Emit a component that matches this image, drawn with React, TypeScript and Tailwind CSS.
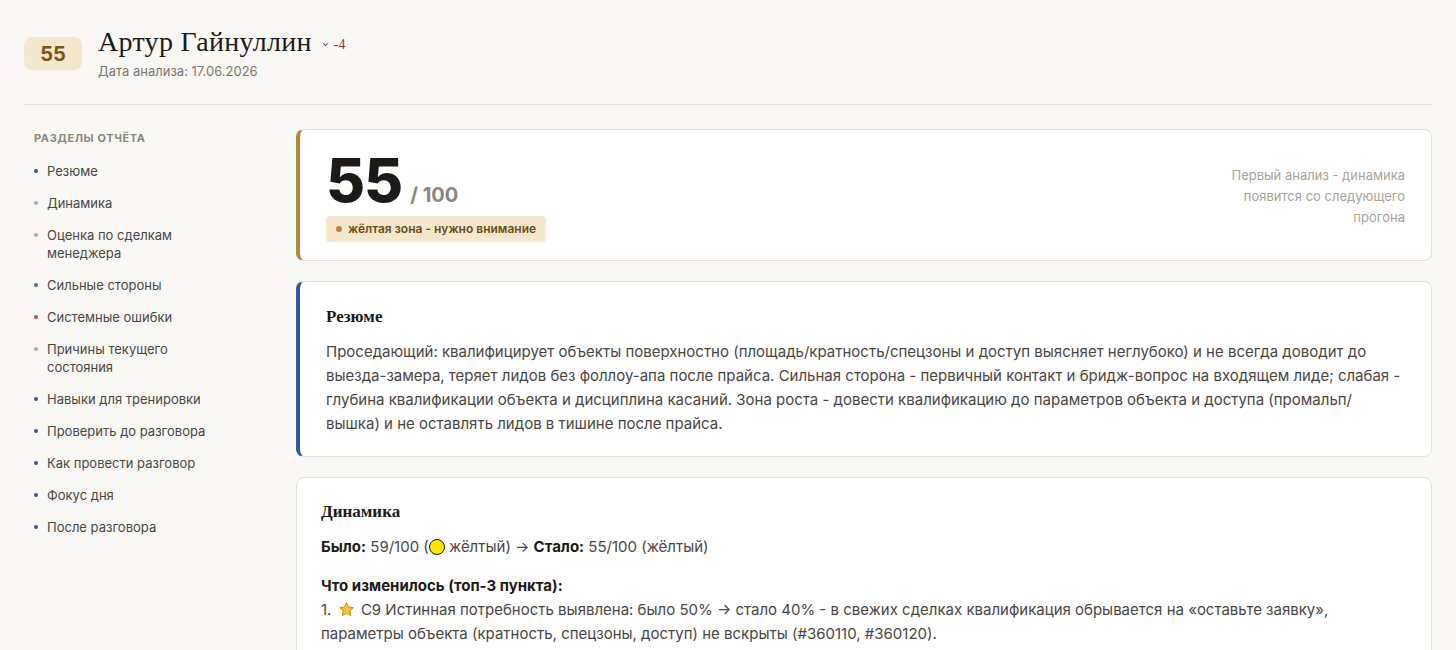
import React from "react";

const sections = [
  { label: "Резюме", dot: "bg-[#2d5a9a]" },
  { label: "Динамика", dot: "bg-[#b5aca0]" },
  { label: "Оценка по сделкам менеджера", dot: "bg-[#b5aca0]" },
  { label: "Сильные стороны", dot: "bg-[#3d8a5a]" },
  { label: "Системные ошибки", dot: "bg-[#c0504a]" },
  { label: "Причины текущего состояния", dot: "bg-[#b5aca0]" },
  { label: "Навыки для тренировки", dot: "bg-[#2d5a9a]" },
  { label: "Проверить до разговора", dot: "bg-[#2d5a9a]" },
  { label: "Как провести разговор", dot: "bg-[#2d5a9a]" },
  { label: "Фокус дня", dot: "bg-[#2d5a9a]" },
  { label: "После разговора", dot: "bg-[#2d5a9a]" },
];

const serif = "font-[family-name:Liberation_Serif,serif]";

function Star() {
  return (
    <svg viewBox="0 0 24 24" className="inline-block h-[17px] w-[17px] align-[-3px] mx-[2px]">
      <path
        d="M12 2.5l2.9 6.1 6.6.8-4.9 4.6 1.3 6.6L12 17.3l-5.9 3.3 1.3-6.6-4.9-4.6 6.6-.8z"
        fill="#f7c23b"
        stroke="#c98a12"
        strokeWidth="1.4"
        strokeLinejoin="round"
      />
    </svg>
  );
}

export default function App() {
  return (
    <div className="min-h-[700px] bg-[#faf8f5] font-[family-name:Inter,sans-serif] text-[#3d3a35] px-6 pb-10">
      {/* Header */}
      <div className="flex items-start gap-4 pt-[26px] pb-[22px] border-b border-[#e6e1d8]">
        <div className="mt-[11px] h-[33px] w-[58px] rounded-lg bg-[#f3e7cc] flex items-center justify-center text-[20px] font-bold text-[#7a5516]">
          55
        </div>
        <div>
          <div className="flex items-center gap-[10px]">
            <h1 className={`${serif} text-[28px] leading-[32px] text-[#1d1a16] tracking-[0.3px]`}>Артур Гайнуллин</h1>
            <span className={`${serif} text-[14px] text-[#a3332e] flex items-center gap-[5px] mt-1`}>
              <svg viewBox="0 0 10 10" className="h-[7px] w-[7px]"><path d="M2 3.5l3 3 3-3" stroke="#a3332e" strokeWidth="1.6" fill="none" /></svg>
              -4
            </span>
          </div>
          <p className="text-[13px] text-[#7d776d] mt-[4px]">Дата анализа: 17.06.2026</p>
        </div>
      </div>

      <div className="grid grid-cols-[248px_1fr] gap-6 pt-6">
        {/* Sidebar */}
        <nav className="pl-[10px]">
          <p className="text-[11px] font-bold tracking-[0.6px] text-[#8d867b] mb-[16px] mt-[1px]">РАЗДЕЛЫ ОТЧЁТА</p>
          <ul className="flex flex-col gap-[14px]">
            {sections.map((s) => (
              <li key={s.label} className="flex items-start gap-[9px] text-[13px] leading-[18px] text-[#4a463f] pr-[50px]">
                <span className={`mt-[7px] h-[4px] w-[4px] shrink-0 rounded-full ${s.dot}`} />
                <span>{s.label}</span>
              </li>
            ))}
          </ul>
        </nav>

        {/* Main */}
        <main className="flex flex-col gap-5">
          <section className="rounded-lg border border-[#e6e1d8] border-l-4 border-l-[#b8863b] bg-white px-[26px] pt-[20px] pb-[18px] flex justify-between">
            <div>
              <div className="flex items-baseline gap-2">
                <span className="text-[60px] leading-[60px] font-extrabold text-[#1d1a16] tracking-[-1px]">55</span>
                <span className="text-[20px] font-bold text-[#8d867b]">/ 100</span>
              </div>
              <span className="mt-[6px] inline-flex items-center gap-[6px] rounded bg-[#f3e7cc] px-[10px] py-[4px] text-[12px] font-semibold text-[#6e4c14]">
                <span className="h-[6px] w-[6px] rounded-full bg-[#b8863b]" />
                жёлтая зона - нужно внимание
              </span>
            </div>
            <p className="text-right text-[13px] leading-[21px] text-[#aaa397] w-[190px] pt-[15px]">
              Первый анализ - динамика появится со следующего прогона
            </p>
          </section>

          <section className="rounded-lg border border-[#e6e1d8] border-l-4 border-l-[#2d5a9a] bg-white px-[26px] pt-[22px] pb-[20px]">
            <h2 className={`${serif} text-[17px] font-bold text-[#1d1a16] mb-[11px]`}>Резюме</h2>
            <p className="text-[15px] leading-[24px] text-[#4a463f]">
              Проседающий: квалифицирует объекты поверхностно (площадь/кратность/спецзоны и доступ выясняет неглубоко) и не всегда доводит до выезда-замера, теряет лидов без фоллоу-апа после прайса. Сильная сторона - первичный контакт и бридж-вопрос на входящем лиде; слабая - глубина квалификации объекта и дисциплина касаний. Зона роста - довести квалификацию до параметров объекта и доступа (промальп/вышка) и не оставлять лидов в тишине после прайса.
            </p>
          </section>

          <section className="rounded-lg border border-[#e6e1d8] bg-white px-6 pt-[22px] pb-6 text-[15px] leading-[24px] text-[#4a463f]">
            <h2 className={`${serif} text-[17px] font-bold text-[#1d1a16] mb-[11px]`}>Динамика</h2>
            <p>
              <b className="text-[#1d1a16]">Было:</b> 59/100 (
              <span className="inline-block h-[16px] w-[16px] rounded-full bg-[#ffe600] border-[1.5px] border-[#1d1a16] align-[-3px]" />
              {" "}жёлтый) → <b className="text-[#1d1a16]">Стало:</b> 55/100 (жёлтый)
            </p>
            <p className="mt-[15px] font-bold text-[#1d1a16]">Что изменилось (топ-3 пункта):</p>
            <p>
              1. <Star /> C9 Истинная потребность выявлена: было 50% → стало 40% - в свежих сделках квалификация обрывается на «оставьте заявку», параметры объекта (кратность, спецзоны, доступ) не вскрыты (#360110, #360120).
            </p>
            <p>
              2. <Star /> E23 Дисциплина выполнения рекомендаций Филина: было 50% → стало 40% - после прайса нет фоллоу-апа, лид остывает в тишине 9 дней.
            </p>
          </section>
        </main>
      </div>
    </div>
  );
}
